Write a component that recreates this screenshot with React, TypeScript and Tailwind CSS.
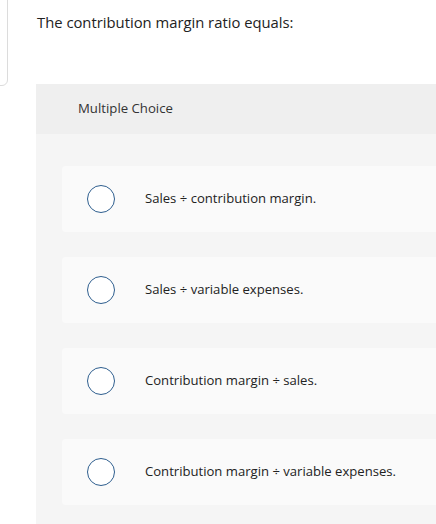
import React from "react";

const options = [
  "Sales ÷ contribution margin.",
  "Sales ÷ variable expenses.",
  "Contribution margin ÷ sales.",
  "Contribution margin ÷ variable expenses.",
];

export default function App() {
  return (
    <div
      className="relative w-[436px] h-[524px] overflow-hidden bg-white text-[#1a1a1a]"
      style={{ fontFamily: '"Open Sans", "Liberation Sans", sans-serif' }}
    >
      <div className="absolute left-[-20px] top-[-20px] w-[28px] h-[106px] rounded-[6px] border border-[#dcdcdc]" />
      <div className="pl-[37px] pt-[12px] h-[84px]">
        <p className="text-[14.8px] leading-[20px] text-[#222]">The contribution margin ratio equals:</p>
      </div>
      <div className="ml-[36px] bg-[#f5f5f5] h-[440px]">
        <div className="h-[50px] bg-[#efefef] flex items-center pl-[42px]">
          <span className="text-[13.2px] text-[#333]">Multiple Choice</span>
        </div>
        <div className="flex flex-col gap-[25px] pl-[26px] pt-[32px]">
          {options.map((o) => (
            <div key={o} className="h-[66px] bg-[#fafafa] rounded-l-[4px] flex items-center">
              <div className="ml-[25px] w-[28px] h-[28px] rounded-full border-[1.5px] border-[#2e5e8e] bg-white" />
              <span className="ml-[30px] text-[13.1px] text-[#222]">{o}</span>
            </div>
          ))}
        </div>
      </div>
    </div>
  );
}
